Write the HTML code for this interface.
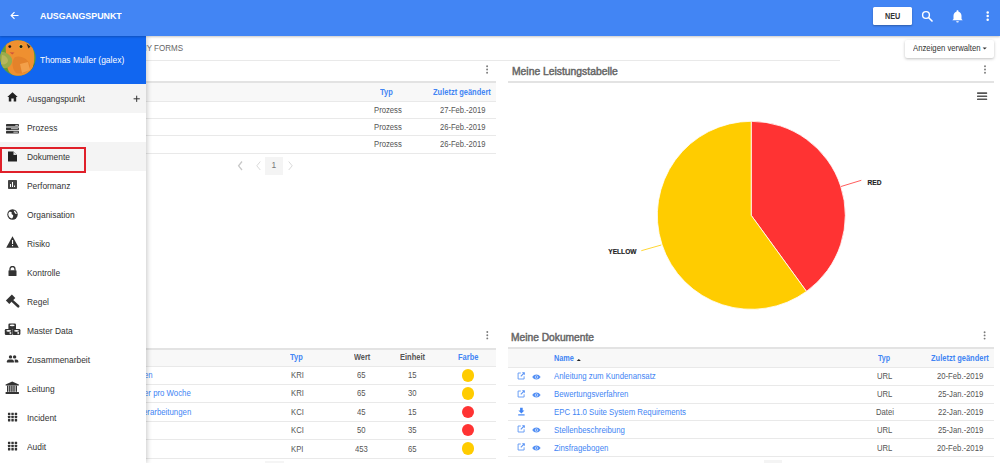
<!DOCTYPE html>
<html><head><meta charset="utf-8"><style>
*{margin:0;padding:0;box-sizing:border-box}
html,body{width:1000px;height:463px;overflow:hidden;background:#fff;font-family:"Liberation Sans",sans-serif;color:#555;position:relative}
.a{position:absolute}
.t{position:absolute;white-space:nowrap;line-height:1;transform-origin:0 0}
.hl{position:absolute;height:1px;background:#e9e9e9}
.hl2{position:absolute;height:2px;background:#e3e3e3}
.thbg{position:absolute;background:#f8f8f8}
.L{position:absolute;left:0;top:0;width:1000px;height:463px}
</style></head><body>
<div class="L" style="z-index:1">
<div class="hl" style="left:0;top:60px;width:840px"></div>
<div class="a" style="left:905px;top:40px;width:89px;height:18px;background:#fff;border-radius:2px;box-shadow:0 1px 3px rgba(0,0,0,.25)"></div>
<svg class="a" style="left:982px;top:47px" width="6" height="4" viewBox="0 0 6 4"><path d="M0.6 0.5H4.8L2.7 2.6z" fill="#333"/></svg>
<svg class="a" style="left:485px;top:63px" width="5" height="13" viewBox="0 0 5 13"><circle cx="2.10" cy="3.30" r="0.95" fill="#7a7a7a"/><circle cx="2.10" cy="6.50" r="0.95" fill="#7a7a7a"/><circle cx="2.10" cy="9.70" r="0.95" fill="#7a7a7a"/></svg>
<div class="hl2" style="left:0;top:81px;width:496px"></div>
<div class="thbg" style="left:0;top:83px;width:496px;height:18.5px"></div>
<div class="hl" style="left:0;top:101.0px;width:496px"></div>
<div class="hl" style="left:0;top:118.0px;width:496px"></div>
<div class="hl" style="left:0;top:135.0px;width:496px"></div>
<div class="hl" style="left:0;top:152.5px;width:496px"></div>
<svg class="a" style="left:236px;top:160px" width="60" height="12" viewBox="236 160 60 12"><path d="M242 161.5L238.6 165.8L242 170" stroke="#c8c8c8" stroke-width="1.3" fill="none"/><path d="M260.3 161.5L256.8 165.8L260.3 170" stroke="#cfcfcf" stroke-width="0.8" fill="none"/><path d="M288.7 161.5L292.2 165.8L288.7 170" stroke="#cfcfcf" stroke-width="0.8" fill="none"/></svg>
<div class="a" style="left:265px;top:157px;width:18px;height:17.5px;background:#f4f4f4"></div>
<div class="t" style="left:271.6px;top:161.3px;font-size:8.4px;color:#777">1</div>
<svg class="a" style="left:983px;top:63px" width="5" height="13" viewBox="0 0 5 13"><circle cx="2.00" cy="3.30" r="0.95" fill="#7a7a7a"/><circle cx="2.00" cy="6.50" r="0.95" fill="#7a7a7a"/><circle cx="2.00" cy="9.70" r="0.95" fill="#7a7a7a"/></svg>
<div class="hl2" style="left:508px;top:81px;width:486px"></div>
<svg class="a" style="left:976.5px;top:92px" width="11" height="9" viewBox="0 0 11 9"><rect x="0" y="0.3" width="10.2" height="1.6" rx="0.6" fill="#555"/><rect x="0" y="3.4" width="10.2" height="1.6" rx="0.6" fill="#555"/><rect x="0" y="6.5" width="10.2" height="1.6" rx="0.6" fill="#555"/></svg>
<svg class="a" style="left:560px;top:100px" width="400" height="230" viewBox="560 100 400 230">
  <path d="M751.2 215.3 L751.2 121.3 A94 94 0 0 1 806.5 291.4 Z" fill="#ff3333" stroke="#fff" stroke-width="0.8"/>
  <path d="M751.2 215.3 L806.5 291.4 A94 94 0 1 1 751.2 121.3 Z" fill="#ffcc00" stroke="#fff" stroke-width="0.8"/>
  <path d="M841 186.5 L861.3 180.3" stroke="#ff3333" stroke-width="0.8" fill="none"/>
  <path d="M641.3 250.7 L661.3 245" stroke="#ffcc00" stroke-width="0.8" fill="none"/>
  <text x="867.6" y="184.9" font-family="Liberation Sans" font-weight="bold" font-size="6.6" fill="#222" stroke="#222" stroke-width="0.15">RED</text>
  <text x="608.3" y="254" font-family="Liberation Sans" font-weight="bold" font-size="6.6" fill="#222" stroke="#222" stroke-width="0.15">YELLOW</text>
</svg>
<svg class="a" style="left:485px;top:329px" width="5" height="13" viewBox="0 0 5 13"><circle cx="2.30" cy="3.00" r="0.95" fill="#7a7a7a"/><circle cx="2.30" cy="6.20" r="0.95" fill="#7a7a7a"/><circle cx="2.30" cy="9.40" r="0.95" fill="#7a7a7a"/></svg>
<div class="hl2" style="left:0;top:347.5px;width:496px"></div>
<div class="thbg" style="left:0;top:349.5px;width:496px;height:16.5px"></div>
<div class="hl" style="left:0;top:365.5px;width:496px"></div>
<div class="hl" style="left:0;top:384.0px;width:496px"></div>
<div class="hl" style="left:0;top:402.1px;width:496px"></div>
<div class="hl" style="left:0;top:420.8px;width:496px"></div>
<div class="hl" style="left:0;top:438.6px;width:496px"></div>
<div class="hl" style="left:0;top:457.8px;width:496px"></div>
<div class="a" style="left:461.80px;top:368.95px;width:12.6px;height:12.6px;border-radius:50%;background:#ffcc00"></div>
<div class="a" style="left:461.80px;top:387.25px;width:12.6px;height:12.6px;border-radius:50%;background:#ffcc00"></div>
<div class="a" style="left:461.80px;top:405.65px;width:12.6px;height:12.6px;border-radius:50%;background:#ff3333"></div>
<div class="a" style="left:461.80px;top:423.90px;width:12.6px;height:12.6px;border-radius:50%;background:#ff3333"></div>
<div class="a" style="left:461.80px;top:442.40px;width:12.6px;height:12.6px;border-radius:50%;background:#ffcc00"></div>
<div class="a" style="left:265px;top:461px;width:18.5px;height:10px;background:#f5f5f5"></div>
<svg class="a" style="left:982px;top:329px" width="5" height="13" viewBox="0 0 5 13"><circle cx="2.60" cy="3.20" r="0.95" fill="#7a7a7a"/><circle cx="2.60" cy="6.40" r="0.95" fill="#7a7a7a"/><circle cx="2.60" cy="9.60" r="0.95" fill="#7a7a7a"/></svg>
<div class="hl2" style="left:508px;top:347px;width:486px"></div>
<div class="thbg" style="left:508px;top:349px;width:486px;height:18px"></div>
<div class="hl" style="left:508px;top:366.5px;width:486px"></div>
<div class="hl" style="left:508px;top:384.7px;width:486px"></div>
<div class="hl" style="left:508px;top:402.5px;width:486px"></div>
<div class="hl" style="left:508px;top:420.0px;width:486px"></div>
<div class="hl" style="left:508px;top:437.8px;width:486px"></div>
<div class="hl" style="left:508px;top:455.6px;width:486px"></div>
<svg class="a" style="left:576px;top:358px" width="6" height="4" viewBox="0 0 6 4"><path d="M0.7 3.1H4.9L2.8 0.9z" fill="#222"/></svg>
<svg class="a" style="left:516.8px;top:371.90px" width="9" height="8" viewBox="0 0 9 8" opacity="0.85"><path d="M3.8 1H1.1V7H7.1V4.3" stroke="#4285f4" stroke-width="0.9" fill="none"/><path d="M3.8 4.3L7.1 1" stroke="#4285f4" stroke-width="1.1"/><path d="M4.9 0.3H7.8V3.2z" fill="#4285f4"/></svg>
<svg class="a" style="left:531.6px;top:373.50px" width="9" height="6" viewBox="0 0 9 6" opacity="0.9"><path d="M0.2 3C1.3 1.3 2.8 0.5 4.4 0.5S7.5 1.3 8.6 3C7.5 4.7 6 5.5 4.4 5.5S1.3 4.7 0.2 3z" fill="#4285f4"/><circle cx="4.4" cy="3" r="1.5" fill="#fff" fill-opacity="0.85"/><circle cx="4.4" cy="3" r="0.9" fill="#4285f4"/></svg>
<svg class="a" style="left:516.8px;top:389.90px" width="9" height="8" viewBox="0 0 9 8" opacity="0.85"><path d="M3.8 1H1.1V7H7.1V4.3" stroke="#4285f4" stroke-width="0.9" fill="none"/><path d="M3.8 4.3L7.1 1" stroke="#4285f4" stroke-width="1.1"/><path d="M4.9 0.3H7.8V3.2z" fill="#4285f4"/></svg>
<svg class="a" style="left:531.6px;top:391.50px" width="9" height="6" viewBox="0 0 9 6" opacity="0.9"><path d="M0.2 3C1.3 1.3 2.8 0.5 4.4 0.5S7.5 1.3 8.6 3C7.5 4.7 6 5.5 4.4 5.5S1.3 4.7 0.2 3z" fill="#4285f4"/><circle cx="4.4" cy="3" r="1.5" fill="#fff" fill-opacity="0.85"/><circle cx="4.4" cy="3" r="0.9" fill="#4285f4"/></svg>
<svg class="a" style="left:516.6px;top:406.95px" width="9" height="9" viewBox="0 0 9 9"><path d="M3.1 0.8H5.7V3.6H7.4L4.4 6.6L1.4 3.6H3.1z" fill="#4285f4"/><rect x="1.2" y="7.3" width="6.4" height="1.2" fill="#4285f4"/></svg>
<svg class="a" style="left:516.8px;top:425.20px" width="9" height="8" viewBox="0 0 9 8" opacity="0.85"><path d="M3.8 1H1.1V7H7.1V4.3" stroke="#4285f4" stroke-width="0.9" fill="none"/><path d="M3.8 4.3L7.1 1" stroke="#4285f4" stroke-width="1.1"/><path d="M4.9 0.3H7.8V3.2z" fill="#4285f4"/></svg>
<svg class="a" style="left:531.6px;top:426.80px" width="9" height="6" viewBox="0 0 9 6" opacity="0.9"><path d="M0.2 3C1.3 1.3 2.8 0.5 4.4 0.5S7.5 1.3 8.6 3C7.5 4.7 6 5.5 4.4 5.5S1.3 4.7 0.2 3z" fill="#4285f4"/><circle cx="4.4" cy="3" r="1.5" fill="#fff" fill-opacity="0.85"/><circle cx="4.4" cy="3" r="0.9" fill="#4285f4"/></svg>
<svg class="a" style="left:516.8px;top:443.00px" width="9" height="8" viewBox="0 0 9 8" opacity="0.85"><path d="M3.8 1H1.1V7H7.1V4.3" stroke="#4285f4" stroke-width="0.9" fill="none"/><path d="M3.8 4.3L7.1 1" stroke="#4285f4" stroke-width="1.1"/><path d="M4.9 0.3H7.8V3.2z" fill="#4285f4"/></svg>
<svg class="a" style="left:531.6px;top:444.60px" width="9" height="6" viewBox="0 0 9 6" opacity="0.9"><path d="M0.2 3C1.3 1.3 2.8 0.5 4.4 0.5S7.5 1.3 8.6 3C7.5 4.7 6 5.5 4.4 5.5S1.3 4.7 0.2 3z" fill="#4285f4"/><circle cx="4.4" cy="3" r="1.5" fill="#fff" fill-opacity="0.85"/><circle cx="4.4" cy="3" r="0.9" fill="#4285f4"/></svg>
<div class="a" style="left:764px;top:460px;width:18px;height:10px;background:#f4f4f4"></div>
<div class="t" style="left:139.70px;top:43.66px;font-size:8.38px;color:#666;transform:scaleX(0.957)">MY FORMS</div>
<div class="t" style="left:912.70px;top:43.91px;font-size:8.38px;color:#333;transform:scaleX(0.924)">Anzeigen verwalten</div>
<div class="t" style="left:511.60px;top:66.89px;font-size:10.06px;color:#666;transform:scaleX(1.029);-webkit-text-stroke:0.45px #666">Meine Leistungstabelle</div>
<div class="t" style="left:511.40px;top:332.59px;font-size:10.06px;color:#666;transform:scaleX(1.018);-webkit-text-stroke:0.45px #666">Meine Dokumente</div>
<div class="t" style="left:379.98px;top:88.01px;font-size:8.38px;color:#4285f4;font-weight:bold;transform:scaleX(0.894)">Typ</div>
<div class="t" style="left:432.90px;top:88.01px;font-size:8.38px;color:#4285f4;font-weight:bold;transform:scaleX(0.894)">Zuletzt geändert</div>
<div class="t" style="left:373.50px;top:105.91px;font-size:8.38px;color:#555;transform:scaleX(0.919)">Prozess</div>
<div class="t" style="left:440.00px;top:105.91px;font-size:8.38px;color:#555;transform:scaleX(0.904)">27-Feb.-2019</div>
<div class="t" style="left:373.50px;top:122.91px;font-size:8.38px;color:#555;transform:scaleX(0.919)">Prozess</div>
<div class="t" style="left:440.00px;top:122.91px;font-size:8.38px;color:#555;transform:scaleX(0.904)">26-Feb.-2019</div>
<div class="t" style="left:373.50px;top:140.16px;font-size:8.38px;color:#555;transform:scaleX(0.919)">Prozess</div>
<div class="t" style="left:440.00px;top:140.16px;font-size:8.38px;color:#555;transform:scaleX(0.904)">26-Feb.-2019</div>
<div class="t" style="left:290.30px;top:353.01px;font-size:8.38px;color:#4285f4;font-weight:bold;transform:scaleX(0.891)">Typ</div>
<div class="t" style="left:353.60px;top:353.01px;font-size:8.38px;color:#555;font-weight:bold;transform:scaleX(0.880)">Wert</div>
<div class="t" style="left:400.15px;top:353.01px;font-size:8.38px;color:#555;font-weight:bold;transform:scaleX(0.894)">Einheit</div>
<div class="t" style="left:457.77px;top:353.01px;font-size:8.38px;color:#4285f4;font-weight:bold;transform:scaleX(0.894)">Farbe</div>
<div class="t" style="left:143.99px;top:370.91px;font-size:8.38px;color:#4285f4;transform:scaleX(0.934)">en</div>
<div class="t" style="left:291.14px;top:370.91px;font-size:8.38px;color:#555;transform:scaleX(0.919)">KRI</div>
<div class="t" style="left:357.16px;top:370.91px;font-size:8.38px;color:#555;transform:scaleX(0.919)">65</div>
<div class="t" style="left:408.36px;top:370.91px;font-size:8.38px;color:#555;transform:scaleX(0.919)">15</div>
<div class="t" style="left:143.95px;top:389.21px;font-size:8.38px;color:#4285f4;transform:scaleX(0.934)">er pro Woche</div>
<div class="t" style="left:291.14px;top:389.21px;font-size:8.38px;color:#555;transform:scaleX(0.919)">KRI</div>
<div class="t" style="left:357.16px;top:389.21px;font-size:8.38px;color:#555;transform:scaleX(0.919)">65</div>
<div class="t" style="left:408.36px;top:389.21px;font-size:8.38px;color:#555;transform:scaleX(0.919)">30</div>
<div class="t" style="left:143.49px;top:407.61px;font-size:8.38px;color:#4285f4;transform:scaleX(0.934)">erarbeitungen</div>
<div class="t" style="left:291.14px;top:407.61px;font-size:8.38px;color:#555;transform:scaleX(0.919)">KCI</div>
<div class="t" style="left:357.16px;top:407.61px;font-size:8.38px;color:#555;transform:scaleX(0.919)">45</div>
<div class="t" style="left:408.36px;top:407.61px;font-size:8.38px;color:#555;transform:scaleX(0.919)">15</div>
<div class="t" style="left:291.14px;top:425.86px;font-size:8.38px;color:#555;transform:scaleX(0.919)">KCI</div>
<div class="t" style="left:357.16px;top:425.86px;font-size:8.38px;color:#555;transform:scaleX(0.919)">50</div>
<div class="t" style="left:408.36px;top:425.86px;font-size:8.38px;color:#555;transform:scaleX(0.919)">35</div>
<div class="t" style="left:291.35px;top:445.06px;font-size:8.38px;color:#555;transform:scaleX(0.919)">KPI</div>
<div class="t" style="left:355.03px;top:445.06px;font-size:8.38px;color:#555;transform:scaleX(0.919)">453</div>
<div class="t" style="left:408.36px;top:445.06px;font-size:8.38px;color:#555;transform:scaleX(0.919)">65</div>
<div class="t" style="left:553.90px;top:353.91px;font-size:8.38px;color:#4285f4;font-weight:bold;transform:scaleX(0.874)">Name</div>
<div class="t" style="left:878.20px;top:353.91px;font-size:8.38px;color:#4285f4;font-weight:bold;transform:scaleX(0.842)">Typ</div>
<div class="t" style="left:930.70px;top:353.91px;font-size:8.38px;color:#4285f4;font-weight:bold;transform:scaleX(0.894)">Zuletzt geändert</div>
<div class="t" style="left:553.90px;top:371.71px;font-size:8.38px;color:#4285f4;transform:scaleX(0.934)">Anleitung zum Kundenansatz</div>
<div class="t" style="left:877.15px;top:371.71px;font-size:8.38px;color:#555;transform:scaleX(0.919)">URL</div>
<div class="t" style="left:937.36px;top:371.71px;font-size:8.38px;color:#555;transform:scaleX(0.919)">20-Feb.-2019</div>
<div class="t" style="left:553.90px;top:390.01px;font-size:8.38px;color:#4285f4;transform:scaleX(0.934)">Bewertungsverfahren</div>
<div class="t" style="left:877.15px;top:390.01px;font-size:8.38px;color:#555;transform:scaleX(0.919)">URL</div>
<div class="t" style="left:937.79px;top:390.01px;font-size:8.38px;color:#555;transform:scaleX(0.919)">25-Jan.-2019</div>
<div class="t" style="left:553.90px;top:408.11px;font-size:8.38px;color:#4285f4;transform:scaleX(0.934)">EPC 11.0 Suite System Requirements</div>
<div class="t" style="left:875.96px;top:408.11px;font-size:8.38px;color:#555;transform:scaleX(0.919)">Datei</div>
<div class="t" style="left:937.79px;top:408.11px;font-size:8.38px;color:#555;transform:scaleX(0.919)">22-Jan.-2019</div>
<div class="t" style="left:553.90px;top:425.71px;font-size:8.38px;color:#4285f4;transform:scaleX(0.934)">Stellenbeschreibung</div>
<div class="t" style="left:877.15px;top:425.71px;font-size:8.38px;color:#555;transform:scaleX(0.919)">URL</div>
<div class="t" style="left:937.79px;top:425.71px;font-size:8.38px;color:#555;transform:scaleX(0.919)">25-Jan.-2019</div>
<div class="t" style="left:553.90px;top:443.51px;font-size:8.38px;color:#4285f4;transform:scaleX(0.934)">Zinsfragebogen</div>
<div class="t" style="left:877.15px;top:443.51px;font-size:8.38px;color:#555;transform:scaleX(0.919)">URL</div>
<div class="t" style="left:937.36px;top:443.51px;font-size:8.38px;color:#555;transform:scaleX(0.919)">20-Feb.-2019</div>
</div>
<div class="a" style="left:0;top:0;width:1000px;height:36px;background:#4285f4;box-shadow:0 1px 2px rgba(0,0,0,.22);z-index:5"></div>
<div class="L" style="z-index:6;pointer-events:none">
<svg class="a" style="left:10px;top:11px" width="9" height="9" viewBox="0 0 9 9"><path d="M8.5 4.5H1.5M4.5 1.2L1.2 4.5L4.5 7.8" stroke="#fff" stroke-width="1.2" fill="none"/></svg>
<div class="a" style="left:873px;top:7px;width:39px;height:18px;background:#fff;border-radius:1.5px;box-shadow:0 1px 2px rgba(0,0,0,.3)"></div>
<svg class="a" style="left:921px;top:10px" width="13" height="13" viewBox="0 0 13 13"><circle cx="5" cy="5" r="3.4" stroke="#fff" stroke-width="1.4" fill="none"/><path d="M7.5 7.5L11.5 11.5" stroke="#fff" stroke-width="1.6"/></svg>
<svg class="a" style="left:951px;top:8.5px" width="13" height="14" viewBox="0 0 13 14"><path d="M6.5 1.2c.6 0 1 .4 1 1v.5c1.9.5 3 2.1 3 4.1v3.2l1.2 1.2H1.3l1.2-1.2V6.8c0-2 1.1-3.6 3-4.1v-.5c0-.6.4-1 1-1z" fill="#fff"/><path d="M5.2 12.3h2.6a1.3 1.3 0 0 1-2.6 0z" fill="#fff"/></svg>
<div class="t" style="left:39.60px;top:11.04px;font-size:9.64px;color:#fff;font-weight:bold;transform:scaleX(0.921)">AUSGANGSPUNKT</div>
<div class="t" style="left:885.20px;top:12.15px;font-size:8.80px;color:#333;font-weight:bold;transform:scaleX(0.824)">NEU</div>
<svg class="a" style="left:985px;top:10px" width="6" height="12" viewBox="0 0 6 12"><circle cx="2.7" cy="2.4" r="1.25" fill="#fff"/><circle cx="2.7" cy="6.1" r="1.25" fill="#fff"/><circle cx="2.7" cy="9.8" r="1.25" fill="#fff"/></svg>
</div>
<div class="a" style="left:0;top:36px;width:146px;height:427px;background:#fff;box-shadow:1px 0 5px rgba(0,0,0,.22);z-index:3"></div>
<div class="L" style="z-index:4">
<div class="a" style="left:0;top:36px;width:146px;height:48px;background:#1166f0"></div>
<svg class="a" style="left:0;top:39.8px" width="36" height="36" viewBox="0 0 36 36">
      <defs><clipPath id="cc"><circle cx="17.9" cy="18" r="17.8"/></clipPath></defs>
      <g clip-path="url(#cc)">
        <rect width="36" height="36" fill="#5f9a3a"/>
        <path d="M0 30 L12 36 L0 36z" fill="#3d6e2a"/>
        <path d="M30 28 L36 22 L36 36 L26 36z" fill="#3d6e2a"/>
        <path d="M6 3 C10 -1 24 -1 30 3 C35 8 35 20 33 27 C30 34 24 37 16 36 C10 35 7 30 7 24 C7 19 5 13 6 3z" fill="#ef9030"/>
        <path d="M15 17 C21 15 29 19 30 26 C29 32 22 35 16 33 C12 29 11 21 15 17z" fill="#e4822a"/>
        <path d="M20 24 L28 22 L30 30 L22 33z" fill="#f3a04a"/>
        <path d="M0 12 C4 11 10 14 12 19 C13 25 8 29 3 28 C0 27 0 20 0 12z" fill="#9aab4a"/>
        <path d="M2 15 C5 15 8 18 8 21 C7 24 4 25 1 24z" fill="#b8b65c"/>
        <circle cx="9.8" cy="6.6" r="1.4" fill="#1b1b1b"/>
        <circle cx="21" cy="6.4" r="2.1" fill="#e8c23a"/>
        <circle cx="21" cy="6.6" r="1.5" fill="#1b1b1b"/>
        <path d="M9.5 12.2 L14.5 12.4 L12.3 14.6z" fill="#d0553c"/>
        <path d="M26.5 3.5 L30.5 6.5 L28.5 8.5z" fill="#2a2a2a"/>
      </g>
    </svg>
<div class="t" style="left:40.25px;top:55.66px;font-size:8.38px;color:#fff;transform:scaleX(1.011)">Thomas Muller (galex)</div>
<div class="a" style="left:0;top:84px;width:146px;height:29px;background:#f4f4f4"><svg class="a" style="left:7px;top:8px" width="11" height="10" viewBox="0 0 11 10"><path d="M5.5 0.3L0.3 5H1.8V9.5H4.3V6.5H6.7V9.5H9.2V5H10.7z" fill="#222"/></svg><svg class="a" style="left:132.7px;top:11px" width="8" height="8" viewBox="0 0 8 8"><path d="M3.7 0.7V6.9M0.6 3.8H6.8" stroke="#333" stroke-width="1"/></svg></div>
<div class="a" style="left:0;top:113px;width:146px;height:29px;background:transparent"><svg class="a" style="left:0;top:0" width="24" height="29" viewBox="0 0 24 29"><g fill="#333"><rect x="6" y="11" width="12.9" height="2.6" rx="0.4"/><rect x="6" y="14.4" width="12.9" height="2.6" rx="0.4"/><rect x="6" y="17.8" width="12.9" height="2.6" rx="0.4"/></g><g fill="#ddd"><rect x="15.3" y="11.9" width="2.6" height="0.9"/><rect x="11" y="15.3" width="6.9" height="0.9"/><rect x="13.4" y="18.7" width="4.5" height="0.9"/></g></svg></div>
<div class="a" style="left:0;top:142px;width:146px;height:29px;background:#f4f4f4"><svg class="a" style="left:8px;top:8.5px" width="9" height="11" viewBox="0 0 9 11"><path d="M0 0.5H5.5L9 4V10.5H0z" fill="#222"/><path d="M5.5 0.5V4H9" fill="#ddd"/></svg></div>
<div class="a" style="left:0;top:171px;width:146px;height:29px;background:transparent"><svg class="a" style="left:8px;top:9px" width="9" height="9" viewBox="0 0 9 9"><rect width="9" height="9" rx="0.8" fill="#444"/><rect x="2" y="4" width="1" height="3" fill="#fff"/><rect x="4" y="2" width="1" height="5" fill="#fff"/><rect x="6" y="5.5" width="1" height="1.5" fill="#fff"/></svg></div>
<div class="a" style="left:0;top:200px;width:146px;height:29px;background:transparent"><svg class="a" style="left:7px;top:9px" width="11" height="11" viewBox="0 0 11 11"><circle cx="5.5" cy="5.5" r="5.2" fill="#333"/><path d="M2 3.2C3 2.5 4 2.6 4.6 3.3C5 4 4.3 4.6 4.8 5.2C5.4 5.8 5.9 5.5 6.2 6.4C6.4 7.3 5.6 8.8 5 9.6C3.2 9.3 1.4 7.6 1.3 5.6C1.3 4.6 1.5 3.8 2 3.2zM6.8 1.4C8.5 2 9.6 3.4 9.8 5C9 5.2 8.3 4.6 7.8 3.9C7.3 3.2 6.8 2.3 6.8 1.4z" fill="#fff"/></svg></div>
<div class="a" style="left:0;top:229px;width:146px;height:29px;background:transparent"><svg class="a" style="left:6px;top:6.5px" width="13" height="12" viewBox="0 0 13 12"><path d="M6.5 0.3L12.8 11.7H0.2z" fill="#333"/><rect x="6" y="4" width="1.1" height="4" fill="#fff"/><rect x="6" y="9" width="1.1" height="1.2" fill="#fff"/></svg></div>
<div class="a" style="left:0;top:258px;width:146px;height:29px;background:transparent"><svg class="a" style="left:8px;top:8.3px" width="9" height="10" viewBox="0 0 9 10"><path d="M2 4.5V3a2.5 2.5 0 0 1 5 0V4.5" stroke="#333" stroke-width="1.3" fill="none"/><rect x="0.5" y="4.3" width="8" height="5.7" rx="0.6" fill="#333"/></svg></div>
<div class="a" style="left:0;top:287px;width:146px;height:29px;background:transparent"><svg class="a" style="left:0;top:0" width="24" height="29" viewBox="0 0 24 29"><path d="M5.9 13.5L11.9 7.5L15.3 10.9L9.3 16.9z" fill="#333"/><path d="M12.6 14.1L18.2 19.3" stroke="#333" stroke-width="2.6" stroke-linecap="round"/></svg></div>
<div class="a" style="left:0;top:316px;width:146px;height:29px;background:transparent"><svg class="a" style="left:0;top:0" width="24" height="29" viewBox="0 0 24 29"><g fill="#333"><rect x="8.4" y="7.6" width="7.6" height="5.9" rx="1.2"/><rect x="4.8" y="13.1" width="7.8" height="5.9" rx="1.2"/><rect x="12.6" y="13.1" width="7.8" height="5.9" rx="1.2"/></g><g fill="#fff"><ellipse cx="12.2" cy="9.3" rx="2.5" ry="0.9"/><ellipse cx="8.7" cy="14.8" rx="2.4" ry="0.9"/><ellipse cx="16.5" cy="14.8" rx="2.4" ry="0.9"/><rect x="9.6" y="16" width="1.6" height="2.2" opacity="0.8"/><rect x="17.4" y="16" width="1.6" height="2.2" opacity="0.8"/></g></svg></div>
<div class="a" style="left:0;top:345px;width:146px;height:29px;background:transparent"><svg class="a" style="left:0;top:0" width="24" height="29" viewBox="0 0 24 29"><circle cx="10.5" cy="11.9" r="1.7" fill="#333"/><circle cx="14.6" cy="11.9" r="1.7" fill="#333"/><path d="M6.9 17.6V16.2C6.9 14.9 8.4 14.5 10.4 14.5S13.9 14.9 13.9 16.2V17.6z" fill="#333"/><path d="M14.7 17.6V14.6C16.6 14.6 18.3 15 18.3 16.2V17.6z" fill="#333"/></svg></div>
<div class="a" style="left:0;top:374px;width:146px;height:29px;background:transparent"><svg class="a" style="left:0;top:0" width="24" height="29" viewBox="0 0 24 29"><path d="M12.2 7.6L18.9 10.4V11.6H5.6V10.4z" fill="#333"/><g fill="#333"><rect x="7" y="11.6" width="1.4" height="6.2"/><rect x="9.1" y="11.6" width="1.4" height="6.2"/><rect x="11.2" y="11.6" width="1.4" height="6.2"/><rect x="13.3" y="11.6" width="1.4" height="6.2"/><rect x="15.6" y="11.6" width="1.4" height="6.2"/></g><rect x="5.6" y="18" width="13.3" height="2" fill="#333"/></svg></div>
<div class="a" style="left:0;top:403px;width:146px;height:29px;background:transparent"><svg class="a" style="left:0;top:0" width="24" height="29" viewBox="0 0 24 29"><g fill="#333"><rect x="7.95" y="9.7" width="2.4" height="2.4" rx="0.3"/><rect x="11.35" y="9.7" width="2.4" height="2.4" rx="0.3"/><rect x="14.75" y="9.7" width="2.4" height="2.4" rx="0.3"/><rect x="7.95" y="12.85" width="2.4" height="2.4" rx="0.3"/><rect x="11.35" y="12.85" width="2.4" height="2.4" rx="0.3"/><rect x="14.75" y="12.85" width="2.4" height="2.4" rx="0.3"/><rect x="7.95" y="16.0" width="2.4" height="2.4" rx="0.3"/><rect x="11.35" y="16.0" width="2.4" height="2.4" rx="0.3"/><rect x="14.75" y="16.0" width="2.4" height="2.4" rx="0.3"/></g></svg></div>
<div class="a" style="left:0;top:432px;width:146px;height:29px;background:transparent"><svg class="a" style="left:0;top:0" width="24" height="29" viewBox="0 0 24 29"><g fill="#333"><rect x="7.95" y="9.7" width="2.4" height="2.4" rx="0.3"/><rect x="11.35" y="9.7" width="2.4" height="2.4" rx="0.3"/><rect x="14.75" y="9.7" width="2.4" height="2.4" rx="0.3"/><rect x="7.95" y="12.85" width="2.4" height="2.4" rx="0.3"/><rect x="11.35" y="12.85" width="2.4" height="2.4" rx="0.3"/><rect x="14.75" y="12.85" width="2.4" height="2.4" rx="0.3"/><rect x="7.95" y="16.0" width="2.4" height="2.4" rx="0.3"/><rect x="11.35" y="16.0" width="2.4" height="2.4" rx="0.3"/><rect x="14.75" y="16.0" width="2.4" height="2.4" rx="0.3"/></g></svg></div>
<div class="t" style="left:26.80px;top:94.69px;font-size:8.52px;color:#333;transform:scaleX(0.986)">Ausgangspunkt</div>
<div class="t" style="left:26.80px;top:123.69px;font-size:8.52px;color:#333;transform:scaleX(0.986)">Prozess</div>
<div class="t" style="left:26.80px;top:152.69px;font-size:8.52px;color:#333;transform:scaleX(0.986)">Dokumente</div>
<div class="t" style="left:26.80px;top:181.69px;font-size:8.52px;color:#333;transform:scaleX(0.986)">Performanz</div>
<div class="t" style="left:26.80px;top:210.69px;font-size:8.52px;color:#333;transform:scaleX(0.986)">Organisation</div>
<div class="t" style="left:26.80px;top:239.69px;font-size:8.52px;color:#333;transform:scaleX(0.986)">Risiko</div>
<div class="t" style="left:26.80px;top:268.69px;font-size:8.52px;color:#333;transform:scaleX(0.986)">Kontrolle</div>
<div class="t" style="left:26.80px;top:297.69px;font-size:8.52px;color:#333;transform:scaleX(0.986)">Regel</div>
<div class="t" style="left:26.80px;top:326.69px;font-size:8.52px;color:#333;transform:scaleX(0.986)">Master Data</div>
<div class="t" style="left:26.80px;top:355.69px;font-size:8.52px;color:#333;transform:scaleX(0.986)">Zusammenarbeit</div>
<div class="t" style="left:26.80px;top:384.69px;font-size:8.52px;color:#333;transform:scaleX(0.986)">Leitung</div>
<div class="t" style="left:26.80px;top:413.69px;font-size:8.52px;color:#333;transform:scaleX(0.986)">Incident</div>
<div class="t" style="left:26.80px;top:442.69px;font-size:8.52px;color:#333;transform:scaleX(0.986)">Audit</div>
<div class="a" style="left:0;top:147px;width:86px;height:26px;border:2px solid #e0202a"></div>
</div>
</body></html>
